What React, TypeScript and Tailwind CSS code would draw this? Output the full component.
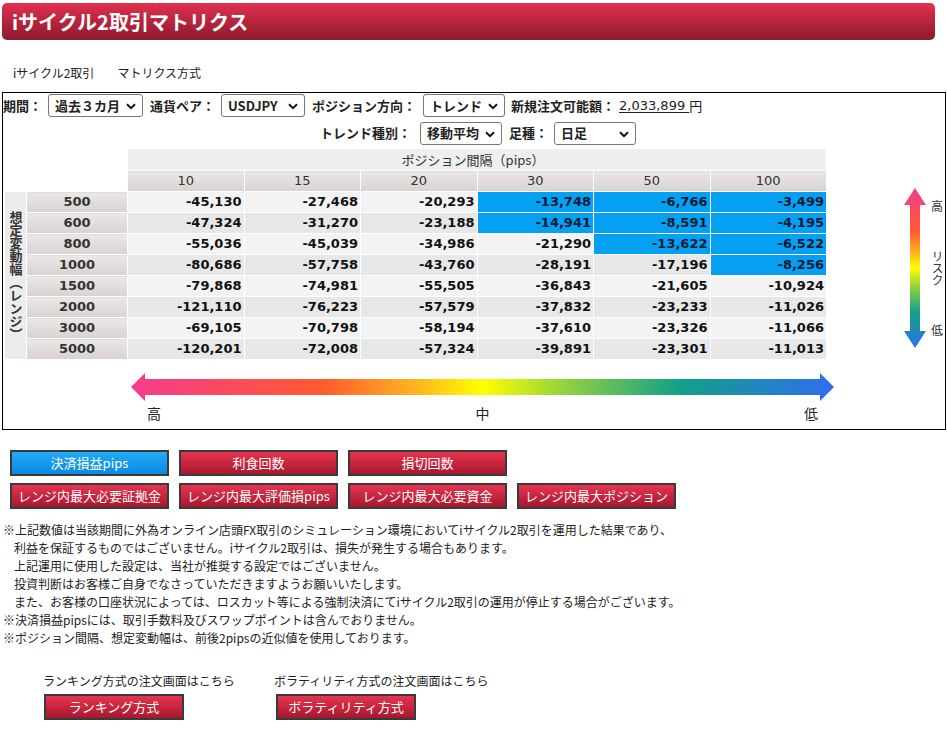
import React from 'react';

// --- Data ---

const COLS = ['10', '15', '20', '30', '50', '100'];

const ROWS: { range: string; values: number[]; blueFrom: number }[] = [
  { range: '500', values: [-45130, -27468, -20293, -13748, -6766, -3499], blueFrom: 3 },
  { range: '600', values: [-47324, -31270, -23188, -14941, -8591, -4195], blueFrom: 3 },
  { range: '800', values: [-55036, -45039, -34986, -21290, -13622, -6522], blueFrom: 4 },
  { range: '1000', values: [-80686, -57758, -43760, -28191, -17196, -8256], blueFrom: 5 },
  { range: '1500', values: [-79868, -74981, -55505, -36843, -21605, -10924], blueFrom: 6 },
  { range: '2000', values: [-121110, -76223, -57579, -37832, -23233, -11026], blueFrom: 6 },
  { range: '3000', values: [-69105, -70798, -58194, -37610, -23326, -11066], blueFrom: 6 },
  { range: '5000', values: [-120201, -72008, -57324, -39891, -23301, -11013], blueFrom: 6 },
];

const NOTES = [
  { mark: true, text: '※上記数値は当該期間に外為オンライン店頭FX取引のシミュレーション環境においてiサイクル2取引を運用した結果であり、' },
  { mark: false, text: '利益を保証するものではございません。iサイクル2取引は、損失が発生する場合もあります。' },
  { mark: false, text: '上記運用に使用した設定は、当社が推奨する設定ではございません。' },
  { mark: false, text: '投資判断はお客様ご自身でなさっていただきますようお願いいたします。' },
  { mark: false, text: 'また、お客様の口座状況によっては、ロスカット等による強制決済にてiサイクル2取引の運用が停止する場合がございます。' },
  { mark: true, text: '※決済損益pipsには、取引手数料及びスワップポイントは含んでおりません。' },
  { mark: true, text: '※ポジション間隔、想定変動幅は、前後2pipsの近似値を使用しております。' },
];

// --- Components ---

const Select = ({ value, w }: { value: string; w: string }) => (
  <div className={`relative flex items-center h-[23px] border border-[#767676] rounded-[3px] bg-white pl-[6px] text-[13px] text-[#222] ${w}`}>
    <span>{value}</span>
    <svg className="absolute right-[6px] top-[8px]" width="10" height="7" viewBox="0 0 10 7">
      <path d="M1 1.2 L5 5.2 L9 1.2" stroke="#111" strokeWidth="2" fill="none" />
    </svg>
  </div>
);

const Btn = ({ label, blue = false, w = 'w-[159px]' }: { label: string; blue?: boolean; w?: string }) => (
  <div
    className={`${w} h-[26px] border-2 border-[#3a3a3a] flex items-center justify-center text-white text-[13px] ${
      blue ? 'bg-linear-to-b from-[#22aaf5] to-[#0a8ae2]' : 'bg-linear-to-b from-[#e8344f] to-[#a6182e]'
    }`}
  >
    {label}
  </div>
);

const GRAD_STOPS = [
  ['0', '#f43c8e'],
  ['0.27', '#ff5a30'],
  ['0.4', '#ffb020'],
  ['0.5', '#ffff00'],
  ['0.62', '#90d040'],
  ['0.78', '#12a088'],
  ['1', '#2f6ef0'],
];

const VerticalArrow = () => (
  <svg width="22" height="160" viewBox="0 0 22 160">
    <defs>
      <linearGradient id="vgrad" x1="0" y1="0" x2="0" y2="1">
        {GRAD_STOPS.map(([o, c]) => (
          <stop key={o} offset={o} stopColor={c} />
        ))}
      </linearGradient>
    </defs>
    <path d="M11 0 L22 17 L16 17 L16 143 L22 143 L11 160 L0 143 L6 143 L6 17 L0 17 Z" fill="url(#vgrad)" />
  </svg>
);

const HorizontalArrow = () => (
  <svg width="703" height="28" viewBox="0 0 703 28">
    <defs>
      <linearGradient id="hgrad" x1="0" y1="0" x2="1" y2="0">
        {GRAD_STOPS.map(([o, c]) => (
          <stop key={o} offset={o} stopColor={c} />
        ))}
      </linearGradient>
    </defs>
    <path d="M0 14 L14 0 L14 6 L689 6 L689 0 L703 14 L689 28 L689 22 L14 22 L14 28 Z" fill="url(#hgrad)" />
  </svg>
);

const fmt = (n: number) => n.toLocaleString('en-US');

export default function App() {
  return (
    <div className="w-[947px] min-h-[751px] bg-white text-[#222] font-['Noto_Sans_CJK_JP','Noto_Sans',sans-serif]">
      {/* Header */}
      <div className="pt-[3px] pl-[2px]">
        <div className="w-[933px] h-[37px] rounded-[5px] bg-linear-to-b from-[#e3304f] to-[#8c1a2c] flex items-center pl-[10px]">
          <h1 className="text-white text-[20px] font-bold leading-none">iサイクル2取引マトリクス</h1>
        </div>
      </div>

      {/* Breadcrumb */}
      <div className="flex h-[16px] mt-[25px] pl-[13px] text-[12px] leading-[16px] gap-[23px]">
        <span>iサイクル2取引</span>
        <span>マトリクス方式</span>
      </div>

      {/* Main box */}
      <div className="mt-[11px] ml-[2px] w-[944px] border border-black pt-[1px] pb-[8px]">
        {/* Controls row 1 */}
        <div className="flex items-center h-[23px] text-[13px] font-semibold">
          <span className="w-[45px] text-[13px]">期間：</span>
          <Select value="過去３カ月" w="w-[95px]" />
          <span className="ml-[7px] w-[71px]">通貨ペア：</span>
          <Select value="USDJPY" w="w-[84px]" />
          <span className="ml-[7px] w-[111px]">ポジション方向：</span>
          <Select value="トレンド" w="w-[82px]" />
          <span className="ml-[6px]">新規注文可能額：</span>
          <span className="ml-[4px] underline underline-offset-2 font-normal font-['DejaVu_Sans',sans-serif] text-[13px] whitespace-pre">2,033,899 </span>
          <span className="font-normal">円</span>
        </div>

        {/* Controls row 2 */}
        <div className="flex items-center h-[22px] mt-[5px] pl-[317px] text-[13px] font-semibold">
          <span className="w-[100px]">トレンド種別：</span>
          <Select value="移動平均" w="w-[82px]" />
          <span className="ml-[7px] w-[45px]">足種：</span>
          <Select value="日足" w="w-[82px]" />
        </div>

        {/* Table + vertical legend */}
        <div className="flex mt-[4px]">
          <table className="ml-px border-collapse table-fixed w-[822px] shrink-0">
            <colgroup>
              <col className="w-[22px]" />
              <col className="w-[101px]" />
              {COLS.map((c) => (
                <col key={c} className="w-[116.5px]" />
              ))}
            </colgroup>
            <thead>
              <tr className="h-[22px]">
                <th colSpan={2} className="bg-white"></th>
                <th colSpan={6} className="bg-[#efefef] border border-white text-[13px] font-normal text-[#333] pr-[8px]">
                  ポジション間隔（pips）
                </th>
              </tr>
              <tr className="h-[21px]">
                <th colSpan={2} className="bg-white"></th>
                {COLS.map((c) => (
                  <th
                    key={c}
                    className="bg-linear-to-b from-[#ebe7e7] to-[#d8d2d2] border border-white text-[13px] font-normal text-[#333] font-['DejaVu_Sans',sans-serif]"
                  >
                    {c}
                  </th>
                ))}
              </tr>
            </thead>
            <tbody>
              {ROWS.map((row, ri) => (
                <tr key={row.range} className="h-[21px]">
                  {ri === 0 && (
                    <td rowSpan={8} className="bg-[#ececec] border border-white align-middle p-0">
                      <div className="flex justify-center">
                        <span className="[writing-mode:vertical-rl] text-[13px] font-bold text-[#333] leading-[16px]">
                          想定変動幅（レンジ）
                        </span>
                      </div>
                    </td>
                  )}
                  <td className="bg-linear-to-b from-[#ebe7e7] to-[#d8d2d2] border border-white text-center text-[13px] font-bold text-[#333] font-['DejaVu_Sans',sans-serif]">
                    {row.range}
                  </td>
                  {row.values.map((v, ci) => {
                    const blue = ci >= row.blueFrom;
                    return (
                      <td
                        key={ci}
                        className={`border border-white text-right pr-[2px] text-[13px] font-bold font-['DejaVu_Sans',sans-serif] ${
                          blue ? 'bg-[#06a0f2] text-[#0c1a33]' : ri % 2 === 0 ? 'bg-[#f3f3f3] text-[#111]' : 'bg-[#e7e7e7] text-[#111]'
                        }`}
                      >
                        {fmt(v)}
                      </td>
                    );
                  })}
                </tr>
              ))}
            </tbody>
          </table>

          <div className="ml-[77px] mt-[40px] shrink-0">
            <VerticalArrow />
          </div>
          <div className="ml-[5px] mt-[52px] w-[12px] h-[136px] flex flex-col justify-between items-center text-[12px] leading-[12px] text-[#333] shrink-0">
            <span>高</span>
            <span className="[writing-mode:vertical-rl] leading-[12px]">リスク</span>
            <span>低</span>
          </div>
        </div>

        {/* Horizontal legend */}
        <div className="mt-[13px] ml-[128px]">
          <HorizontalArrow />
        </div>
        <div className="mt-[4px] ml-[144px] w-[671px] flex justify-between text-[14px] leading-[16px] text-[#222]">
          <span>高</span>
          <span>中</span>
          <span>低</span>
        </div>
      </div>

      {/* Buttons */}
      <div className="mt-[20px] ml-[10px] flex flex-col gap-[7px]">
        <div className="flex gap-[10px]">
          <Btn label="決済損益pips" blue />
          <Btn label="利食回数" />
          <Btn label="損切回数" />
        </div>
        <div className="flex gap-[10px]">
          <Btn label="レンジ内最大必要証拠金" />
          <Btn label="レンジ内最大評価損pips" />
          <Btn label="レンジ内最大必要資金" />
          <Btn label="レンジ内最大ポジション" />
        </div>
      </div>

      {/* Notes */}
      <div className="mt-[12px] pl-[3px] text-[12px] leading-[18px] text-[#222]">
        {NOTES.map((n, i) => (
          <p key={i} className={n.mark ? '' : 'pl-[11px]'}>
            {n.text}
          </p>
        ))}
      </div>

      {/* Other methods */}
      <div className="mt-[26px] pl-[43px] flex text-[12px] leading-[16px]">
        <div className="w-[231px] flex flex-col gap-[5px]">
          <span>ランキング方式の注文画面はこちら</span>
          <div className="ml-px">
            <Btn label="ランキング方式" w="w-[140px]" />
          </div>
        </div>
        <div className="flex flex-col gap-[5px]">
          <span>ボラティリティ方式の注文画面はこちら</span>
          <div className="ml-[2px]">
            <Btn label="ボラティリティ方式" w="w-[140px]" />
          </div>
        </div>
      </div>
    </div>
  );
}
